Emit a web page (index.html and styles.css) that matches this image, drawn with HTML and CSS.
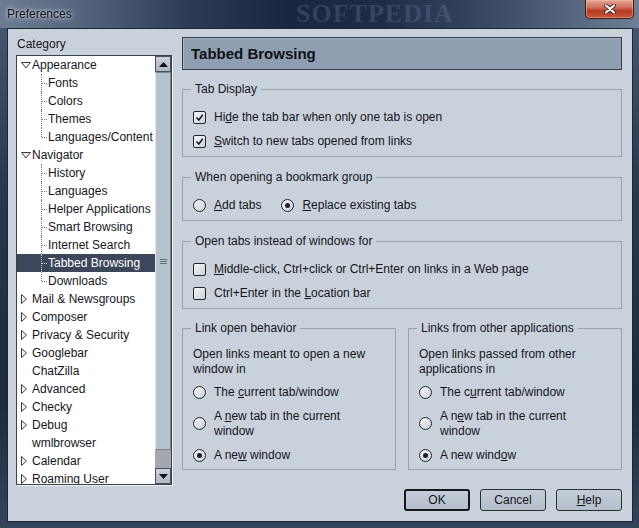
FILE: index.html
```html
<!DOCTYPE html>
<html lang="en">
<head>
    <meta charset="UTF-8">
    <title>Preferences</title>
    <link rel="stylesheet" href="styles.css">
</head>
<body>

<div class="window">
    <div class="titlebar">
        <span class="title">Preferences</span>
        <span class="watermark">SOFTPEDIA</span>
        <div class="close-btn">
            <svg width="12" height="10" viewBox="0 0 12 10">
                <path d="M2 1.5 L10 8.5 M10 1.5 L2 8.5" stroke="#3a2a2a" stroke-width="4" stroke-linecap="round"/>
                <path d="M2 1.5 L10 8.5 M10 1.5 L2 8.5" stroke="#fff" stroke-width="2.2" stroke-linecap="round"/>
            </svg>
        </div>
    </div>

    <div class="client">
        <div class="main">
            <div class="sidebar">
                <div class="cat-label">Category</div>
                <div class="tree">
                    <div class="tree-list">
                        <div class="row top"><span class="twisty"><svg width="10" height="7"><polygon points="0.5,0.5 9.5,0.5 5,6" fill="#f4f4f4" stroke="#3c3c3c"/></svg></span>Appearance</div>
                        <div class="row child">Fonts</div>
                        <div class="row child">Colors</div>
                        <div class="row child">Themes</div>
                        <div class="row child last">Languages/Content</div>
                        <div class="row top"><span class="twisty"><svg width="10" height="7"><polygon points="0.5,0.5 9.5,0.5 5,6" fill="#f4f4f4" stroke="#3c3c3c"/></svg></span>Navigator</div>
                        <div class="row child">History</div>
                        <div class="row child">Languages</div>
                        <div class="row child">Helper Applications</div>
                        <div class="row child">Smart Browsing</div>
                        <div class="row child">Internet Search</div>
                        <div class="row child selected">Tabbed Browsing</div>
                        <div class="row child last">Downloads</div>
                        <div class="row top"><span class="twisty"><svg width="7" height="10"><polygon points="0.5,0.5 0.5,9.5 5.5,5" fill="#f4f4f4" stroke="#3c3c3c"/></svg></span>Mail &amp; Newsgroups</div>
                        <div class="row top"><span class="twisty"><svg width="7" height="10"><polygon points="0.5,0.5 0.5,9.5 5.5,5" fill="#f4f4f4" stroke="#3c3c3c"/></svg></span>Composer</div>
                        <div class="row top"><span class="twisty"><svg width="7" height="10"><polygon points="0.5,0.5 0.5,9.5 5.5,5" fill="#f4f4f4" stroke="#3c3c3c"/></svg></span>Privacy &amp; Security</div>
                        <div class="row top"><span class="twisty"><svg width="7" height="10"><polygon points="0.5,0.5 0.5,9.5 5.5,5" fill="#f4f4f4" stroke="#3c3c3c"/></svg></span>Googlebar</div>
                        <div class="row top"><span class="twisty"></span>ChatZilla</div>
                        <div class="row top"><span class="twisty"><svg width="7" height="10"><polygon points="0.5,0.5 0.5,9.5 5.5,5" fill="#f4f4f4" stroke="#3c3c3c"/></svg></span>Advanced</div>
                        <div class="row top"><span class="twisty"><svg width="7" height="10"><polygon points="0.5,0.5 0.5,9.5 5.5,5" fill="#f4f4f4" stroke="#3c3c3c"/></svg></span>Checky</div>
                        <div class="row top"><span class="twisty"><svg width="7" height="10"><polygon points="0.5,0.5 0.5,9.5 5.5,5" fill="#f4f4f4" stroke="#3c3c3c"/></svg></span>Debug</div>
                        <div class="row top"><span class="twisty"></span>wmlbrowser</div>
                        <div class="row top"><span class="twisty"><svg width="7" height="10"><polygon points="0.5,0.5 0.5,9.5 5.5,5" fill="#f4f4f4" stroke="#3c3c3c"/></svg></span>Calendar</div>
                        <div class="row top"><span class="twisty"><svg width="7" height="10"><polygon points="0.5,0.5 0.5,9.5 5.5,5" fill="#f4f4f4" stroke="#3c3c3c"/></svg></span>Roaming User</div>
                    </div>
                    <div class="scrollbar">
                        <div class="sb-btn"><svg width="9" height="5"><polygon points="0,5 9,5 4.5,0" fill="#111"/></svg></div>
                        <div class="sb-thumb"><span class="grip"></span></div>
                        <div class="sb-track"></div>
                        <div class="sb-btn"><svg width="9" height="5"><polygon points="0,0 9,0 4.5,5" fill="#111"/></svg></div>
                    </div>
                </div>
            </div>

            <div class="panel">
                <div class="panel-header">Tabbed Browsing</div>

                <fieldset class="group">
                    <legend>Tab Display</legend>
                    <div class="option"><span class="check"><svg width="11" height="11"><path d="M2.5 5.5 L4.8 8 L8.8 2.8" fill="none" stroke="#222" stroke-width="1.7"/></svg></span><span>Hi<u>d</u>e the tab bar when only one tab is open</span></div>
                    <div class="option"><span class="check"><svg width="11" height="11"><path d="M2.5 5.5 L4.8 8 L8.8 2.8" fill="none" stroke="#222" stroke-width="1.7"/></svg></span><span><u>S</u>witch to new tabs opened from links</span></div>
                </fieldset>

                <fieldset class="group">
                    <legend>When opening a bookmark group</legend>
                    <div class="option-row">
                        <div class="option"><span class="radio"></span><span><u>A</u>dd tabs</span></div>
                        <div class="option"><span class="radio on"></span><span><u>R</u>eplace existing tabs</span></div>
                    </div>
                </fieldset>

                <fieldset class="group">
                    <legend>Open tabs instead of windows for</legend>
                    <div class="option"><span class="check"></span><span><u>M</u>iddle-click, Ctrl+click or Ctrl+Enter on links in a Web page</span></div>
                    <div class="option"><span class="check"></span><span>Ctrl+Enter in the <u>L</u>ocation bar</span></div>
                </fieldset>

                <div class="split">
                    <fieldset class="group">
                        <legend>Link open behavior</legend>
                        <p class="desc">Open links meant to open a new<br>window in</p>
                        <div class="option"><span class="radio"></span><span>The <u>c</u>urrent tab/window</span></div>
                        <div class="option tall"><span class="radio"></span><span>A <u>n</u>ew tab in the current<br>window</span></div>
                        <div class="option"><span class="radio on"></span><span>A ne<u>w</u> window</span></div>
                    </fieldset>
                    <fieldset class="group">
                        <legend>Links from other applications</legend>
                        <p class="desc">Open links passed from other<br>applications in</p>
                        <div class="option"><span class="radio"></span><span>The c<u>u</u>rrent tab/window</span></div>
                        <div class="option tall"><span class="radio"></span><span>A n<u>e</u>w tab in the current<br>window</span></div>
                        <div class="option"><span class="radio on"></span><span>A new wind<u>o</u>w</span></div>
                    </fieldset>
                </div>
            </div>
        </div>

        <div class="buttons">
            <button class="btn default">OK</button>
            <button class="btn">Cancel</button>
            <button class="btn"><u>H</u>elp</button>
        </div>
    </div>
</div>

</body>
</html>
```

FILE: styles.css
```css
body {
    margin: 0;
    font-family: "Liberation Sans", Arial, sans-serif;
    font-size: 12px;
    color: #15161c;
}
.window {
    width: 639px;
    height: 528px;
    display: flex;
    flex-direction: column;
    background: linear-gradient(180deg, #4a5a72 0%, #2a384e 35%, #1e2a3c 75%, #34445c 100%);
    overflow: hidden;
}
.titlebar {
    position: relative;
    height: 28px;
    flex: none;
    display: flex;
    align-items: flex-start;
    background: linear-gradient(90deg, #6c7c92 0%, #56667e 12%, #2c3a54 30%, #1a2640 45%, #1f2c46 60%, #3c4c66 78%, #6e7e94 100%);
}
.title {
    margin: 7px 0 0 7px;
    line-height: 15px;
    color: #0c0c10;
    text-shadow: 0 0 6px rgba(225, 232, 242, 0.9), 0 0 3px rgba(225, 232, 242, 0.9);
}
.watermark {
    position: absolute;
    left: 296px;
    top: 0;
    line-height: 28px;
    font-family: "Liberation Serif", serif;
    font-weight: bold;
    font-size: 26px;
    letter-spacing: 1px;
    color: rgba(140, 162, 195, 0.22);
}
.close-btn {
    margin-left: auto;
    margin-right: 5px;
    width: 49px;
    height: 19px;
    box-sizing: border-box;
    border: 1px solid #3e1c16;
    border-top: none;
    border-radius: 0 0 5px 5px;
    background: linear-gradient(180deg, #e4a596 0%, #d0725c 40%, #b83a20 60%, #c8553a 100%);
    box-shadow: inset 0 0 0 1px rgba(255, 200, 180, 0.45);
    display: flex;
    align-items: center;
    justify-content: center;
}
.client {
    flex: 1;
    min-height: 0;
    margin: 0 6px 6px 7px;
    border: 1px solid #1c2636;
    background-color: #c9d1da;
    padding: 8px 10px 10px 8px;
    display: flex;
    flex-direction: column;
}
.main {
    display: flex;
    gap: 10px;
}
.sidebar {
    width: 156px;
    display: flex;
    flex-direction: column;
}
.cat-label {
    line-height: 15px;
    padding-left: 1px;
    margin-bottom: 3px;
}
.tree {
    height: 430px;
    box-sizing: border-box;
    display: flex;
    border: 1px solid #3c434c;
    box-shadow: 1px 1px 0 #eef1f4;
    background-color: #fff;
}
.tree-list {
    flex: 1;
    overflow: hidden;
}
.row {
    position: relative;
    height: 18px;
    line-height: 18px;
    white-space: nowrap;
    display: flex;
    align-items: center;
}
.row.top {
    padding-left: 4px;
}
.twisty {
    width: 11px;
    height: 18px;
    display: flex;
    align-items: center;
    flex: none;
}
.twisty svg {
    display: block;
}
.row.child {
    padding-left: 31px;
}
.row.child::before {
    content: "";
    position: absolute;
    left: 24px;
    top: 0;
    bottom: 0;
    border-left: 1px dotted #7c7c7c;
}
.row.child.last::before {
    bottom: 9px;
}
.row.child::after {
    content: "";
    position: absolute;
    left: 25px;
    top: 9px;
    width: 5px;
    border-top: 1px dotted #7c7c7c;
}
.row.selected {
    background-color: #3c4859;
    color: #fff;
}
.row.selected::before,
.row.selected::after {
    border-color: #c8d0da;
}
.scrollbar {
    width: 16px;
    flex: none;
    display: flex;
    flex-direction: column;
    background-color: #a3a7ae;
}
.sb-btn {
    height: 16px;
    flex: none;
    box-sizing: border-box;
    border: 1px solid #4a505a;
    background: linear-gradient(180deg, #c8d1db, #aeb9c5);
    display: flex;
    align-items: center;
    justify-content: center;
}
.sb-thumb {
    flex: 0 0 378px;
    box-sizing: border-box;
    border: 1px solid #7c8490;
    border-left-color: #dfe5eb;
    background-color: #b7c2cd;
    display: flex;
    align-items: center;
    justify-content: center;
}
.grip {
    width: 7px;
    height: 5px;
    background: repeating-linear-gradient(180deg, #66707c 0, #66707c 1px, transparent 1px, transparent 2px);
}
.sb-track {
    flex: 1;
}
.panel {
    width: 440px;
    display: flex;
    flex-direction: column;
}
.panel-header {
    height: 33px;
    box-sizing: border-box;
    border: 1px solid #333c48;
    box-shadow: inset 1px 1px 0 #a6b4c3;
    background-color: #8e9fb1;
    padding-left: 8px;
    display: flex;
    align-items: center;
    font-size: 15px;
    font-weight: bold;
    color: #101014;
}
.group {
    margin: 13px 0 0;
    padding: 8px 10px 3px;
    border: 1px solid #99a2ad;
    min-width: 0;
}
.group:first-of-type {
    margin-top: 12px;
}
.group legend {
    padding: 0 4px;
    margin-left: -2px;
    line-height: 15px;
}
.option {
    height: 24px;
    display: flex;
    align-items: center;
    white-space: nowrap;
}
.option.tall {
    height: 39px;
    line-height: 15px;
}
.option-row {
    display: flex;
    gap: 20px;
}
.check,
.radio {
    width: 13px;
    height: 13px;
    box-sizing: border-box;
    margin-right: 8px;
    flex: none;
    border: 1px solid #23262b;
    background: linear-gradient(135deg, #f4f6f8 0%, #dde2e8 60%, #c6ccd4 100%);
    display: flex;
    align-items: center;
    justify-content: center;
}
.check {
    border-radius: 2px;
}
.check svg {
    display: block;
}
.radio {
    border-radius: 50%;
}
.radio.on::after {
    content: "";
    width: 5px;
    height: 5px;
    border-radius: 50%;
    background-color: #1d2026;
}
.split {
    display: grid;
    grid-template-columns: 1fr 1fr;
    column-gap: 12px;
    margin-top: 12px;
}
.split .group {
    margin-top: 0;
    padding-top: 11px;
    padding-bottom: 2px;
}
.desc {
    margin: 0 0 3px;
    line-height: 15px;
}
.buttons {
    flex: none;
    margin-top: 4px;
    display: flex;
    justify-content: flex-end;
    gap: 10px;
}
.btn {
    width: 66px;
    height: 22px;
    box-sizing: border-box;
    border: 1px solid #2a2e35;
    border-radius: 3px;
    background: linear-gradient(180deg, #c4cdd7 0%, #b4bfcb 100%);
    font-family: "Liberation Sans", Arial, sans-serif;
    font-size: 12px;
    color: #15161c;
    padding: 0;
}
.btn.default {
    border-width: 2px;
    border-color: #15181c;
}
```
